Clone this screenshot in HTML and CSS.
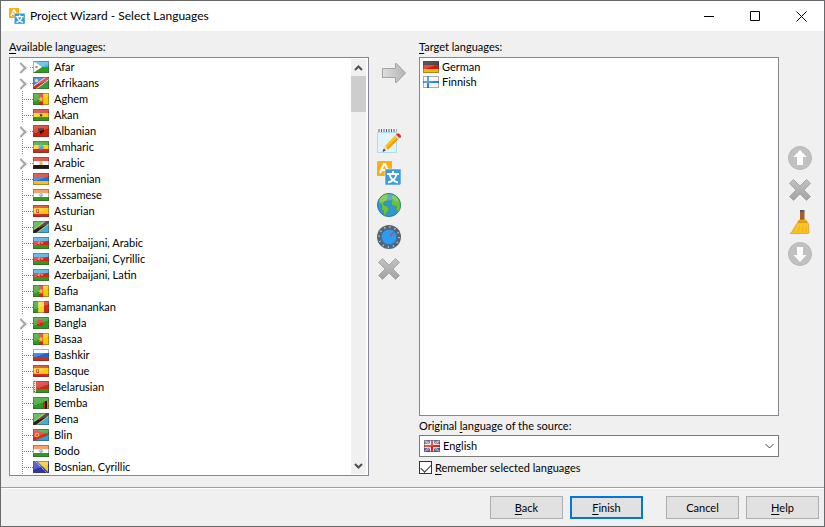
FILE: index.html
```
<!DOCTYPE html>
<html lang="en">
<head>
	<meta charset="utf-8">
	<title>Project Wizard - Select Languages</title>
	<meta name="viewport" content="width=device-width">
	<link rel="stylesheet" href="styles.css">
</head>
<body>
	<!-- flags and shared icons -->
	<svg class="defs" aria-hidden="true">
		<linearGradient id="grey" x1="0" y1="0" x2="0" y2="1">
			<stop offset="0" stop-color="#c2c2c2"/><stop offset="1" stop-color="#a2a2a2"/>
		</linearGradient>
		<linearGradient id="arrow" x1="0" y1="0" x2="1" y2="0">
			<stop offset="0" stop-color="#dedede"/><stop offset="1" stop-color="#b4b4b4"/>
		</linearGradient>
		<symbol id="dj" viewBox="0 0 16 12"><path fill="#4fb3e6" d="M0 0h16v6H0z"/><path fill="#2fa01c" d="M0 6h16v6H0z"/><path fill="#fff" d="M0 0l9 6-9 6z"/><circle cx="3.5" cy="6" r="1.2" fill="#e0403a"/></symbol>
		<symbol id="na" viewBox="0 0 16 12"><path fill="#2b6fc4" d="M0 0h16L0 12z"/><path fill="#2fa03a" d="M16 0v12H0z"/><path stroke="#fff" stroke-width="4.500" d="M0 12L16 0"/><path stroke="#d62b20" stroke-width="3.2" d="M0 12L16 0"/><circle cx="3.5" cy="3.5" r="1.5" fill="#ffd94a"/></symbol>
		<symbol id="cm" viewBox="0 0 16 12"><path fill="#2f9a1c" d="M0 0h6v12H0z"/><path fill="#d8261a" d="M6 0h4.500v12H6z"/><path fill="#f5c800" d="M10.500 0H16v12h-5.500z"/><path fill="#fbb61c" d="M8 3.500l1 2h1.500L9.300 7l.5 2L8 8l-1.800 1 .5-2-1.200-1.500H7z"/></symbol>
		<symbol id="gh" viewBox="0 0 16 12"><path fill="#d42a1a" d="M0 0h16v4H0z"/><path fill="#fbcf15" d="M0 4h16v4H0z"/><path fill="#2f9a1c" d="M0 8h16v4H0z"/><path fill="#222" d="M8 4l.7 1.400H10L8.900 6.300l.4 1.500L8 7l-1.300.8.400-1.500L6 5.400h1.300z"/></symbol>
		<symbol id="al" viewBox="0 0 16 12"><path fill="#d2200f" d="M0 0h16v12H0z"/><path fill="#2a0c0a" d="M5 3l2 .5L8 3l1 .5 2-.5v3.500L9.500 7 8 9.500 6.500 7 5 6.500z"/></symbol>
		<symbol id="et" viewBox="0 0 16 12"><path fill="#2f9a1c" d="M0 0h16v4H0z"/><path fill="#fbcf15" d="M0 4h16v4H0z"/><path fill="#d42a1a" d="M0 8h16v4H0z"/><circle cx="8" cy="6" r="2.600" fill="#4aa6c8"/></symbol>
		<symbol id="eg" viewBox="0 0 16 12"><path fill="#d42a1a" d="M0 0h16v4H0z"/><path fill="#fff" d="M0 4h16v4H0z"/><path fill="#1a1a1a" d="M0 8h16v4H0z"/><path fill="#e8b73a" d="M6.500 4h3v4h-3z"/></symbol>
		<symbol id="am" viewBox="0 0 16 12"><path fill="#d42a1a" d="M0 0h16v4H0z"/><path fill="#1b6fe0" d="M0 4h16v4H0z"/><path fill="#fbc015" d="M0 8h16v4H0z"/></symbol>
		<symbol id="in" viewBox="0 0 16 12"><path fill="#f5843a" d="M0 0h16v4H0z"/><path fill="#fff" d="M0 4h16v4H0z"/><path fill="#2f9a1c" d="M0 8h16v4H0z"/><circle cx="8" cy="6" r="1.500" fill="#b9c3ea" stroke="#6f80c8" stroke-width=".6"/></symbol>
		<symbol id="es" viewBox="0 0 16 12"><path fill="#d42a1a" d="M0 0h16v12H0z"/><path fill="#fdc60a" d="M0 3h16v6H0z"/><path fill="#b5502a" d="M3 4h3v4H3z"/><path fill="#e8b090" d="M4 5h1v2H4z"/></symbol>
		<symbol id="tz" viewBox="0 0 16 12"><path fill="#3da63a" d="M0 0h16L0 12z"/><path fill="#3fb0e6" d="M16 0v12H0z"/><path stroke="#f5cf2a" stroke-width="5" d="M0 12L16 0"/><path stroke="#222" stroke-width="3.500" d="M0 12L16 0"/></symbol>
		<symbol id="az" viewBox="0 0 16 12"><path fill="#3ba4e0" d="M0 0h16v4H0z"/><path fill="#dc2318" d="M0 4h16v4H0z"/><path fill="#2f9a1c" d="M0 8h16v4H0z"/><path fill="#fff" d="M7.500 4.500a1.600 1.600 0 1 0 0 3 1.200 1.200 0 1 1 0-3zM9 5l.4.700.8.300-.8.300L9 7l-.4-.7-.6-.3.600-.3z"/></symbol>
		<symbol id="ml" viewBox="0 0 16 12"><path fill="#2f9a1c" d="M0 0h5.500v12H0z"/><path fill="#fbd31a" d="M5.500 0H11v12H5.500z"/><path fill="#d8261a" d="M11 0h5v12h-5z"/></symbol>
		<symbol id="bd" viewBox="0 0 16 12"><path fill="#2b9a1e" d="M0 0h16v12H0z"/><circle cx="7" cy="6" r="3.300" fill="#dc2014"/></symbol>
		<symbol id="ru" viewBox="0 0 16 12"><path fill="#fff" d="M0 0h16v4H0z"/><path fill="#1f66d0" d="M0 4h16v4H0z"/><path fill="#d42a1a" d="M0 8h16v4H0z"/></symbol>
		<symbol id="by" viewBox="0 0 16 12"><path fill="#d0281c" d="M0 0h16v8H0z"/><path fill="#2f9a1c" d="M0 8h16v4H0z"/><path fill="#f3dcd8" d="M0 0h3v12H0z"/><path stroke="#d0281c" stroke-dasharray="1 1" d="M1.500 0v12"/></symbol>
		<symbol id="zm" viewBox="0 0 16 12"><path fill="#2b9a1e" d="M0 0h16v12H0z"/><path fill="#c8281c" d="M10 4h2v8h-2z"/><path fill="#1a1a1a" d="M12 4h2v8h-2z"/><path fill="#e87a1a" d="M14 4h2v8h-2z"/><path fill="#c8641c" d="M11 2h4v1h-4z"/></symbol>
		<symbol id="er" viewBox="0 0 16 12"><path fill="#2f9a2c" d="M0 0h16v6H0z"/><path fill="#2f9fe0" d="M0 6h16v6H0z"/><path fill="#dc2a18" d="M0 0l16 6-16 6z"/><circle cx="4" cy="6" r="1.800" fill="none" stroke="#e8b03a"/></symbol>
		<symbol id="ba" viewBox="0 0 16 12"><path fill="#2a35b8" d="M0 0h16v12H0z"/><path fill="#fbc818" d="M4 0h11v11z"/><path stroke="#e8e8ff" stroke-dasharray="1 1" d="M2 0l12 12"/></symbol>
		<symbol id="de" viewBox="0 0 16 12"><path fill="#1a1a1a" d="M0 0h16v4H0z"/><path fill="#d8180c" d="M0 4h16v4H0z"/><path fill="#fbb60c" d="M0 8h16v4H0z"/></symbol>
		<symbol id="fi" viewBox="0 0 16 12"><path fill="#f4f4f4" d="M0 0h16v12H0z"/><path fill="#2a86dc" d="M4 0h2v12H4zM0 5h16v2H0z"/></symbol>
		<symbol id="gb" viewBox="0 0 16 12"><path fill="#2f6cc0" d="M0 0h16v12H0z"/><path stroke="#e4e8f4" stroke-width="1.600" d="M0 0l16 12M16 0L0 12"/><path stroke="#d8281c" stroke-width=".8" d="M0 0l16 12M16 0L0 12"/><path fill="#f4e4e4" d="M6 0h4v12H6zM0 4h16v4H0z"/><path fill="#d8281c" d="M7 0h2v12H7zM0 5h16v2H0z"/></symbol>
		<symbol id="translate" viewBox="0 0 24 24">
			<path fill="#fbae17" d="M1 0h14v15H0V1z"/>
			<path fill="none" stroke="#fff" stroke-width="2" d="M3 12L7 3h1l4 9M4.500 9h6"/>
			<path fill="#3a9be0" stroke="#fff" stroke-width=".5" d="M8 8h16v15l-1 1H8z"/>
			<path fill="none" stroke="#fff" stroke-width="1.800" d="M10 13h12M16 10v3M12.500 13.500c1 4 4 7 8.500 8M19.500 13.500c-1 4-4 7-8.500 8"/>
		</symbol>
		<symbol id="cross" viewBox="0 0 24 24"><path fill="url(#grey)" stroke="#a9a9a9" d="M5.500 1.500L12 8l6.500-6.500 4 4L16 12l6.500 6.500-4 4L12 16l-6.500 6.500-4-4L8 12 1.500 5.500z"/></symbol>
	</svg>

	<div class="window">
		<header class="titlebar">
			<svg class="app-icon"><use href="#translate"/></svg>
			<h1>Project Wizard - Select Languages</h1>
			<button class="win-btn" aria-label="Minimize"><svg viewBox="0 0 11 11"><path d="M0 5.500h10"/></svg></button>
			<button class="win-btn" aria-label="Maximize"><svg viewBox="0 0 11 11"><path d="M.5.5h9v9h-9z"/></svg></button>
			<button class="win-btn" aria-label="Close"><svg viewBox="0 0 11 11"><path d="M.5.5l10 10M10.500.5l-10 10"/></svg></button>
		</header>

		<main class="content">
			<section class="available">
				<h2 class="caption"><u>A</u>vailable languages:</h2>
				<div class="listbox">
					<ul class="tree">
						<li class="parent"><i></i><span class="flag"><svg><use href="#dj"/></svg></span>Afar</li>
						<li class="parent"><i></i><span class="flag"><svg><use href="#na"/></svg></span>Afrikaans</li>
						<li><i></i><span class="flag"><svg><use href="#cm"/></svg></span>Aghem</li>
						<li><i></i><span class="flag"><svg><use href="#gh"/></svg></span>Akan</li>
						<li class="parent"><i></i><span class="flag"><svg><use href="#al"/></svg></span>Albanian</li>
						<li><i></i><span class="flag"><svg><use href="#et"/></svg></span>Amharic</li>
						<li class="parent"><i></i><span class="flag"><svg><use href="#eg"/></svg></span>Arabic</li>
						<li><i></i><span class="flag"><svg><use href="#am"/></svg></span>Armenian</li>
						<li><i></i><span class="flag"><svg><use href="#in"/></svg></span>Assamese</li>
						<li><i></i><span class="flag"><svg><use href="#es"/></svg></span>Asturian</li>
						<li><i></i><span class="flag"><svg><use href="#tz"/></svg></span>Asu</li>
						<li><i></i><span class="flag"><svg><use href="#az"/></svg></span>Azerbaijani, Arabic</li>
						<li><i></i><span class="flag"><svg><use href="#az"/></svg></span>Azerbaijani, Cyrillic</li>
						<li><i></i><span class="flag"><svg><use href="#az"/></svg></span>Azerbaijani, Latin</li>
						<li><i></i><span class="flag"><svg><use href="#cm"/></svg></span>Bafia</li>
						<li><i></i><span class="flag"><svg><use href="#ml"/></svg></span>Bamanankan</li>
						<li class="parent"><i></i><span class="flag"><svg><use href="#bd"/></svg></span>Bangla</li>
						<li><i></i><span class="flag"><svg><use href="#cm"/></svg></span>Basaa</li>
						<li><i></i><span class="flag"><svg><use href="#ru"/></svg></span>Bashkir</li>
						<li><i></i><span class="flag"><svg><use href="#es"/></svg></span>Basque</li>
						<li><i></i><span class="flag"><svg><use href="#by"/></svg></span>Belarusian</li>
						<li><i></i><span class="flag"><svg><use href="#zm"/></svg></span>Bemba</li>
						<li><i></i><span class="flag"><svg><use href="#tz"/></svg></span>Bena</li>
						<li><i></i><span class="flag"><svg><use href="#er"/></svg></span>Blin</li>
						<li><i></i><span class="flag"><svg><use href="#in"/></svg></span>Bodo</li>
						<li><i></i><span class="flag"><svg><use href="#ba"/></svg></span>Bosnian, Cyrillic</li>
					</ul>
					<div class="scrollbar">
						<button aria-label="Scroll up"><svg viewBox="0 0 9 6"><path d="M1 5l3.500-3.500L8 5"/></svg></button>
						<div class="thumb"></div>
						<button class="down" aria-label="Scroll down"><svg viewBox="0 0 9 6"><path d="M1 1l3.500 3.500L8 1"/></svg></button>
					</div>
				</div>
			</section>

			<div class="tools">
				<button class="tool add" aria-label="Add language" disabled>
					<svg viewBox="0 0 24 24"><path fill="url(#arrow)" stroke="#a3a3a3" d="M.5 7.500h13v-5h1l9 9.500-9 9.500h-1v-5H.5z"/></svg>
				</button>
				<button class="tool" aria-label="Edit">
					<svg viewBox="0 0 24 24">
						<path fill="#e3f3fc" stroke="#b5d9ec" d="M.5 3.500h19v20H.5z"/>
						<path stroke="#55636e" stroke-width="3" stroke-dasharray="1 1.500" d="M1.500 1.500h18"/>
						<path fill="#fbc21a" d="M8 17L18.500 6l3.500 3.500L11 20.500z"/>
						<path fill="#ef9a12" d="M9.700 19L20.500 8l1.500 1.500L11 20.500z"/>
						<path fill="#f3d5a8" d="M8 17l3 3.500L6 22.500z"/>
						<path fill="#333" d="M6.800 19.500l1.700 2L5.500 23z"/>
						<path fill="#cfd6da" d="M17.500 7L19 5.500 22.500 9 21 10.500z"/>
						<path fill="#d3302f" d="M19 5.500l1-1h2l2 2v2L22.500 9z"/>
					</svg>
				</button>
				<button class="tool" aria-label="Translate"><svg><use href="#translate"/></svg></button>
				<button class="tool" aria-label="All regions">
					<svg viewBox="0 0 24 24">
						<circle cx="12" cy="12" r="11.500" fill="#2f96d8" stroke="#2475ad"/>
						<path fill="#6cc23c" stroke="#3f9428" stroke-width=".6" d="M2 6l4-4 4-1.200 2 1L10.500 3l1.500 1.500-2 1.500 1 2-3 .5-1.500 2 .5 1.500 2.500 1 2.500 2-.5 3-2 2-1 3-1.500-.5-.5-4-2-3 .5-3L2 9z"/>
						<path fill="#6cc23c" stroke="#3f9428" stroke-width=".6" d="M14 4l2-2 3 1 3 4 1.200 3v5L22 18l-2 1-1-3 .5-2.500-3-.5-2.500-2 .5-3 2-1.500-1.500-.5z"/>
						<path fill="#fff" opacity=".2" d="M2 10C3 4 7 1 12 1s9 3 10 8C16 6 8 7 2 10z"/>
					</svg>
				</button>
				<button class="tool" aria-label="Settings">
					<svg viewBox="0 0 24 24">
						<circle cx="12" cy="12" r="12" fill="#56646f"/>
						<circle cx="12" cy="12" r="10" fill="none" stroke="#b4bec5" stroke-width="2" stroke-dasharray="1.200 4.036"/>
						<circle cx="12" cy="12" r="7.700" fill="#2f9bf0" stroke="#2476bd" stroke-width=".8"/>
						<path stroke="#c4485a" stroke-width="1.500" d="M13 11l3.500-3.500"/>
					</svg>
				</button>
				<button class="tool" aria-label="Clear" disabled><svg><use href="#cross"/></svg></button>
			</div>

			<section class="target">
				<h2 class="caption"><u>T</u>arget languages:</h2>
				<ul class="listbox chosen">
					<li><span class="flag"><svg><use href="#de"/></svg></span>German</li>
					<li><span class="flag"><svg><use href="#fi"/></svg></span>Finnish</li>
				</ul>
				<label class="source-label" for="source">Original <u>l</u>anguage of the source:</label>
				<div class="combo">
					<span class="flag"><svg><use href="#gb"/></svg></span>
					<select id="source">
						<option>English</option>
					</select>
					<svg class="caret" viewBox="0 0 9 6"><path d="M.5 1l4 4 4-4"/></svg>
				</div>
				<div class="remember">
					<input type="checkbox" id="remember" checked>
					<label for="remember"><u>R</u>emember selected languages</label>
				</div>
			</section>

			<div class="tools order">
				<button class="tool" aria-label="Move up" disabled>
					<svg viewBox="0 0 24 24"><circle cx="12" cy="12" r="11.500" fill="#c1c1c1" stroke="#b7b7b7"/><path fill="#fff" d="M12 4l6.500 7H15v8H9v-8H5.500z"/></svg>
				</button>
				<button class="tool" aria-label="Remove" disabled><svg><use href="#cross"/></svg></button>
				<button class="tool" aria-label="Remove all">
					<svg viewBox="0 0 24 24">
						<path fill="#a85a2c" d="M12 1.500h4.500V11H12z"/>
						<path fill="#45606e" d="M12 0h4.500v2H12z"/>
						<path fill="#fbc425" stroke="#d89a14" stroke-width=".7" d="M11 10h7l2.500 4 .5 9-4 .7H2l2-2 3-5z"/>
						<path fill="none" stroke="#e8ab1c" stroke-width=".8" d="M8 16l-3 6M12 16l-2.500 6.500M15 16l-1 6.500M18 17v5"/>
						<path fill="#de9a1a" d="M10.500 11h8l1 2h-10z"/>
					</svg>
				</button>
				<button class="tool" aria-label="Move down" disabled>
					<svg viewBox="0 0 24 24"><circle cx="12" cy="12" r="11.500" fill="#c1c1c1" stroke="#b7b7b7"/><path fill="#fff" d="M12 20l6.500-7H15V5H9v8H5.500z"/></svg>
				</button>
			</div>
		</main>

		<footer class="footer">
			<button><u>B</u>ack</button>
			<button class="default"><u>F</u>inish</button>
			<button class="cancel">Cancel</button>
			<button><u>H</u>elp</button>
		</footer>
	</div>
</body>
</html>
```
FILE: styles.css
```
*{
	box-sizing: border-box;
	margin: 0;
	padding: 0;
	list-style: none;
}
body{
	font: 11px/16px Lato, "Liberation Sans", sans-serif;
	color: #000;
}
button, select, input{
	font: inherit;
	color: inherit;
}
button{
	border: 0;
	background: none;
}
svg{
	display: block;
}
u{
	text-underline-offset: 2px;
}
.defs{
	position: absolute;
	width: 0;
	height: 0;
}
.window{
	display: flex;
	flex-direction: column;
	min-height: 100vh;
	border: 1px solid #69696b;
	background: #f0f0f0;
}

/* title bar */
.titlebar{
	display: flex;
	align-items: center;
	height: 30px;
	padding-left: 8px;
	background: #fff;
}
.titlebar h1{
	flex: 1;
	margin-left: 5px;
	font-size: 12px;
	font-weight: normal;
}
.app-icon{
	width: 16px;
	height: 16px;
}
.win-btn{
	display: flex;
	justify-content: center;
	align-items: center;
	width: 46px;
	height: 30px;
}
.win-btn svg{
	width: 11px;
	height: 11px;
	fill: none;
	stroke: #000;
}

/* content */
.content{
	flex: 1;
	display: grid;
	grid-template-columns: 1fr 50px 1fr 45px;
	padding: 8px 0 11px 8px;
}
.caption{
	height: 18px;
	font-size: 11px;
	font-weight: normal;
}
.listbox{
	border: 1px solid #828790;
	background: #fff;
}
.available .listbox{
	display: flex;
	padding-right: 2px;
}
.flag{
	position: relative;
	flex: none;
	width: 16px;
	height: 12px;
}
.flag svg{
	width: 16px;
	height: 12px;
}
.flag::after{
	content: "";
	position: absolute;
	inset: 0;
	border: 1px solid rgba(60, 60, 60, .4);
	background: linear-gradient(160deg, rgba(255, 255, 255, .3), rgba(255, 255, 255, .2) 50%, transparent 51%) border-box;
}
.tree{
	flex: 1;
	padding-top: 1px;
}
.tree li{
	display: flex;
	align-items: center;
	height: 16px;
}
.tree .flag{
	margin-right: 5px;
}
.tree i{
	position: relative;
	width: 11px;
	height: 16px;
	margin-left: 12px;
	background:
		repeating-linear-gradient(#808080 0 1px, transparent 1px 2px) 0 0 / 1px 16px no-repeat,
		repeating-linear-gradient(90deg, #808080 0 1px, transparent 1px 2px) 0 8px / 11px 1px no-repeat;
}
.tree .parent i{
	background: repeating-linear-gradient(90deg, #808080 0 1px, transparent 1px 2px) 8px 8px / 3px 1px no-repeat;
}
.tree .parent i::before{
	content: "";
	position: absolute;
	left: -5px;
	top: 5px;
	width: 6px;
	height: 6px;
	border: solid #a6a6a6;
	border-width: 2px 2px 0 0;
	transform: rotate(45deg);
}
.scrollbar{
	display: flex;
	flex-direction: column;
	width: 15px;
	margin: 1px 0;
	background: #f0f0f0;
}
.scrollbar button{
	display: flex;
	justify-content: center;
	align-items: center;
	height: 17px;
}
.scrollbar svg{
	width: 9px;
	height: 6px;
	fill: none;
	stroke: #505050;
	stroke-width: 2;
}
.scrollbar .down{
	margin-top: auto;
}
.thumb{
	height: 36px;
	background: #cdcdcd;
}

/* icon columns */
.tools{
	display: flex;
	flex-direction: column;
	align-items: center;
	gap: 8px;
	padding: 22px 10px 0 0;
}
.tool{
	width: 24px;
	height: 24px;
}
.tool svg{
	width: 24px;
	height: 24px;
}
.add{
	align-self: flex-end;
	margin: 0 3px 36px 0;
}
.order{
	padding: 107px 3px 0 0;
}

/* target side */
.target{
	display: flex;
	flex-direction: column;
}
.chosen{
	flex: 1;
	padding: 1px 3px;
}
.chosen li{
	display: flex;
	align-items: center;
	gap: 3px;
	height: 15px;
}
.source-label{
	padding: 2px 0 1px;
}
.combo{
	position: relative;
	display: flex;
	align-items: center;
	height: 22px;
	padding-left: 4px;
	border: 1px solid #7a7a7a;
	background: #fff;
}
.combo select{
	flex: 1;
	height: 20px;
	padding-left: 3px;
	border: 0;
	background: none;
	appearance: none;
	outline: 0;
}
.caret{
	position: absolute;
	right: 4px;
	width: 9px;
	height: 6px;
	fill: none;
	stroke: #444;
	pointer-events: none;
}
.remember{
	display: flex;
	align-items: flex-start;
	gap: 3px;
	padding-top: 3px;
}
.remember input{
	width: 13px;
	height: 13px;
	margin-top: 1px;
	appearance: none;
	border: 1px solid #333;
	background: #fff;
}
.remember input:checked::before{
	content: "";
	display: block;
	width: 9px;
	height: 5px;
	margin: 2px 1px;
	border: solid #333;
	border-width: 0 0 1px 1px;
	transform: rotate(-45deg);
}

/* footer */
.footer{
	display: flex;
	justify-content: flex-end;
	gap: 7px;
	padding: 8px 5px 7px;
	border-top: 1px solid #a0a0a0;
	box-shadow: inset 0 1px #fff;
}
.footer button{
	width: 73px;
	height: 23px;
	border: 1px solid #adadad;
	background: #e1e1e1;
}
.footer .default{
	border: 2px solid #0078d7;
}
.footer .cancel{
	margin-left: 16px;
}
```
